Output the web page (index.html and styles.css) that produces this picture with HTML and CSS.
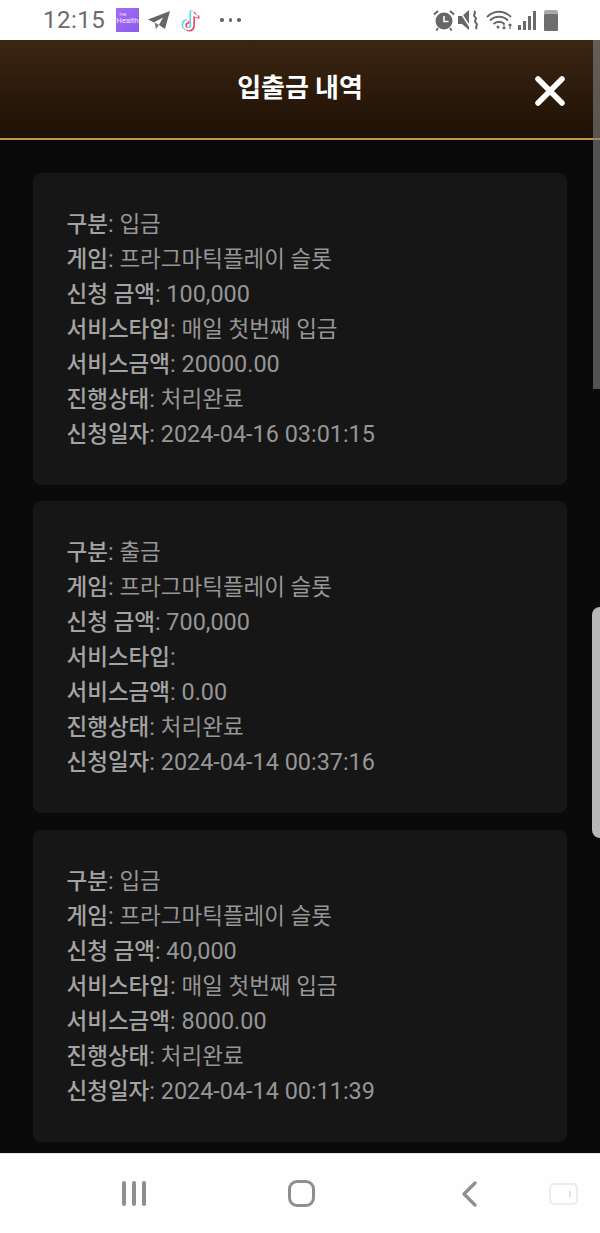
FILE: index.html
```html
<!DOCTYPE html>
<html lang="ko">
<head>
<meta charset="utf-8">
<title>입출금 내역</title>
<link rel="stylesheet" href="styles.css">
</head>
<body>
<div class="phone">
  <div class="status">
    <div class="status-left">
      <span class="clock">12:15</span>
      <span class="app-health"><span class="app-health-top">THE</span><span class="app-health-text">Health</span></span>
      <svg class="ico-tg" viewBox="0 0 22 20"><path d="M0 9.500 22 1 17 19 11 15 15 7.500 6 12.500Z" fill="#666"/><path d="M6.500 12.500 8 19 11 15Z" fill="#777"/></svg>
      <svg class="ico-tt" viewBox="0 0 22 24">
        <path d="M11 2.500v14a4 4 0 1 1-4-4M11 2.500c.4 3 2.500 5 6 5.300" fill="none" stroke="#55dbe2" stroke-width="3"/>
        <path d="M13.500 4v14a4 4 0 1 1-4-4M13.500 4c.4 3 2.500 5 6 5.300" fill="none" stroke="#f3486f" stroke-width="3"/>
        <path d="M12.200 3.200v14a4 4 0 1 1-4-4M12.200 3.200c.4 3 2.500 5 6 5.300" fill="none" stroke="#fff" stroke-width="2.200"/>
      </svg>
      <span class="dots"><i></i><i></i><i></i></span>
    </div>
    <div class="status-right">
      <svg class="ico-alarm" viewBox="0 0 22 22"><circle cx="11" cy="12" r="8.500" fill="#666"/><path d="M11 7V12.500H15.500" fill="none" stroke="#fff" stroke-width="1.600"/><path d="M1 5.500 5 2M21 5.500 17 2M5 19 3.500 21.500M17 19 18.500 21.500" stroke="#666" stroke-width="2" fill="none"/></svg>
      <svg class="ico-mute" viewBox="0 0 20 20"><path d="M0 6H4L11 0V20L4 14H0Z" fill="#666"/><path d="M1 0 12 17" stroke="#fff" stroke-width="1.500"/><path d="M16 1c3 2-2 4 1 6s-2 4 1 6-2 4 1 6" fill="none" stroke="#666" stroke-width="2"/></svg>
      <svg class="ico-wifi" viewBox="0 0 26 20"><path d="M1 7c7-7 17-7 24 0M4 10.500c5-5 13-5 18 0M7.500 14c3-3 8-3 11 0" fill="none" stroke="#666" stroke-width="1.800"/><circle cx="12" cy="17" r="1.500" fill="#666"/><path d="M18 14v5M16.500 17.500l1.500 1.500 1.500-1.500M24 19v-5M22.500 15.500l1.500-1.500 1.500 1.500" fill="none" stroke="#666" stroke-width="1.200"/></svg>
      <span class="signal"><i class="s1"></i><i class="s2"></i><i class="s3"></i><i class="s4"></i></span>
      <span class="battery"><i></i></span>
    </div>
  </div>

  <div class="screen">
    <header class="head">
      <h1 class="title">입출금 내역</h1>
      <svg class="close" viewBox="0 0 30 30"><path d="M3 3 27 27M27 3 3 27" stroke="#fff" stroke-width="5.500" stroke-linecap="round"/></svg>
    </header>

    <main class="list">
      <section class="card">
        <p class="row"><b>구분</b>: <span class="ko">입금</span></p>
        <p class="row"><b>게임</b>: <span class="ko">프라그마틱플레이 슬롯</span></p>
        <p class="row"><b>신청 금액</b>: 100,000</p>
        <p class="row"><b>서비스타입</b>: <span class="ko">매일 첫번째 입금</span></p>
        <p class="row"><b>서비스금액</b>: 20000.00</p>
        <p class="row"><b>진행상태</b>: <span class="ko">처리완료</span></p>
        <p class="row"><b>신청일자</b>: 2024-04-16 03:01:15</p>
      </section>
      <section class="card">
        <p class="row"><b>구분</b>: <span class="ko">출금</span></p>
        <p class="row"><b>게임</b>: <span class="ko">프라그마틱플레이 슬롯</span></p>
        <p class="row"><b>신청 금액</b>: 700,000</p>
        <p class="row"><b>서비스타입</b>:</p>
        <p class="row"><b>서비스금액</b>: 0.00</p>
        <p class="row"><b>진행상태</b>: <span class="ko">처리완료</span></p>
        <p class="row"><b>신청일자</b>: 2024-04-14 00:37:16</p>
      </section>
      <section class="card">
        <p class="row"><b>구분</b>: <span class="ko">입금</span></p>
        <p class="row"><b>게임</b>: <span class="ko">프라그마틱플레이 슬롯</span></p>
        <p class="row"><b>신청 금액</b>: 40,000</p>
        <p class="row"><b>서비스타입</b>: <span class="ko">매일 첫번째 입금</span></p>
        <p class="row"><b>서비스금액</b>: 8000.00</p>
        <p class="row"><b>진행상태</b>: <span class="ko">처리완료</span></p>
        <p class="row"><b>신청일자</b>: 2024-04-14 00:11:39</p>
      </section>
    </main>

    <div class="scroll-thumb"></div>
    <div class="edge-handle"></div>
  </div>

  <nav class="nav">
    <span class="nav-recent"><i></i><i></i><i></i></span>
    <span class="nav-home"></span>
    <svg class="nav-back" viewBox="0 0 16 26"><path d="M14 2 3 13 14 24" fill="none" stroke="#8f8f8f" stroke-width="3.200" stroke-linecap="round" stroke-linejoin="round"/></svg>
    <span class="nav-extra"><i></i></span>
  </nav>
</div>
</body>
</html>
```
FILE: styles.css
```css
* { box-sizing: border-box; }
html, body { margin: 0; padding: 0; }
body {
  width: 600px;
  height: 1233px;
  overflow: hidden;
  background: #fff;
  font-family: Roboto, "Noto Sans CJK KR", sans-serif;
}
.phone {
  width: 600px;
  height: 1233px;
  display: flex;
  flex-direction: column;
}

/* status bar */
.status {
  height: 40px;
  flex: none;
  display: flex;
  align-items: center;
  justify-content: space-between;
  padding: 0 42px 0 43px;
  background: #fff;
}
.status-left, .status-right { display: flex; align-items: center; }
.clock { font-size: 24px; color: #6b6b6b; letter-spacing: 0.5px; width: 73px; }
.app-health {
  width: 23px;
  height: 24px;
  background: linear-gradient(135deg, #a56cf0, #8a5cf0);
  display: flex;
  flex-direction: column;
  align-items: center;
  justify-content: center;
  padding-bottom: 2px;
}
.app-health-top { font-size: 4px; color: #f4eaff; line-height: 1; align-self: flex-start; margin-left: 3px; }
.app-health-text { font-size: 7.500px; color: #f4eaff; line-height: 1; }
.ico-tg { width: 22px; height: 20px; margin-left: 9px; }
.ico-tt { width: 22px; height: 24px; margin-left: 10px; }
.dots { display: flex; gap: 5px; margin-left: 18px; }
.dots i { width: 3.500px; height: 3.500px; border-radius: 50%; background: #666; }
.ico-alarm { width: 22px; height: 22px; }
.ico-mute { width: 20px; height: 20px; margin-left: 3px; }
.ico-wifi { width: 26px; height: 20px; margin-left: 8px; }
.signal { display: flex; align-items: flex-end; gap: 2px; height: 19px; margin-left: 6px; }
.signal i { width: 3px; background: #6a6a6a; }
.signal .s1 { height: 5px; }
.signal .s2 { height: 9px; }
.signal .s3 { height: 14px; }
.signal .s4 { height: 19px; }
.battery {
  position: relative;
  width: 14px;
  height: 17px;
  margin-left: 8px;
  margin-top: 4px;
  background: #6e6e6e;
  border-radius: 1px;
}
.battery i {
  position: absolute;
  top: -4px;
  left: 0;
  width: 14px;
  height: 4px;
  background: #aaa;
  border-radius: 2px 2px 0 0;
}

/* dark screen */
.screen {
  position: relative;
  height: 1113px;
  flex: none;
  background: #0a0a0a;
  overflow: hidden;
}
.head {
  position: relative;
  height: 100px;
  display: flex;
  align-items: center;
  justify-content: center;
  padding-bottom: 8px;
  background: linear-gradient(180deg, #3b2612 0%, #1e1004 100%);
  border-bottom: 2px solid #c7964a;
}
.title {
  margin: 0;
  font-size: 26px;
  font-weight: 700;
  color: #fff;
  letter-spacing: -0.1px;
}
.close {
  position: absolute;
  left: 535px;
  top: 36px;
  width: 30px;
  height: 30px;
}
.list {
  display: flex;
  flex-direction: column;
  gap: 16.250px;
  padding: 33px 33px 0;
}
.card {
  height: 312px;
  padding: 34px 33.500px 0;
  background: #161616;
  border-radius: 8px;
}
.row {
  margin: 0;
  height: 35px;
  line-height: 35px;
  font-size: 23.400px;
  color: #969696;
  white-space: nowrap;
}
.row b { font-size: 22.500px; font-weight: 500; color: #a3a3a3; }
.ko { font-size: 22.500px; }

.scroll-thumb {
  position: absolute;
  right: 0;
  top: 0;
  width: 7px;
  height: 349px;
  background: rgba(130, 130, 130, 0.6);
}
.edge-handle {
  position: absolute;
  right: 0;
  top: 567px;
  width: 8px;
  height: 231px;
  background: #b8b8b8;
  border-radius: 8px 0 0 8px;
}

/* nav bar */
.nav {
  position: relative;
  flex: 1;
  background: #fefefe;
  border-top: 1px solid #e4e4e0;
}
.nav-recent {
  position: absolute;
  left: 122px;
  top: 27px;
  display: flex;
  gap: 6.500px;
}
.nav-recent i { width: 3.500px; height: 25px; background: #8f8f8f; border-radius: 2px; }
.nav-home {
  position: absolute;
  left: 288px;
  top: 26px;
  width: 27px;
  height: 27px;
  border: 3.500px solid #8f8f8f;
  border-radius: 9px;
}
.nav-back { position: absolute; left: 461px; top: 27px; width: 16px; height: 26px; }
.nav-extra {
  position: absolute;
  left: 549px;
  top: 29px;
  width: 29px;
  height: 22px;
  border: 2px solid #ececec;
  border-radius: 5px;
}
.nav-extra i {
  position: absolute;
  right: 5px;
  top: 6px;
  width: 2px;
  height: 6px;
  background: #e0e0e0;
}
```
